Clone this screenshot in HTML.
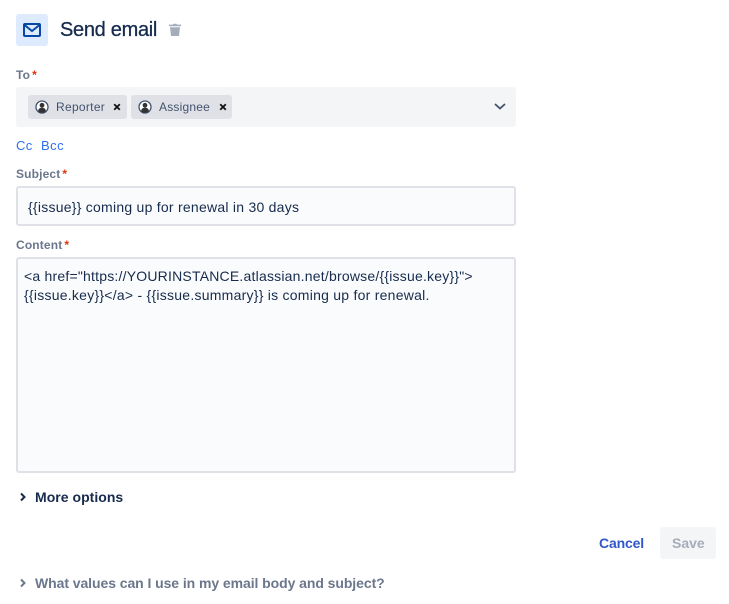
<!DOCTYPE html>
<html><head><meta charset="utf-8">
<style>
html,body{margin:0;padding:0;background:#fff;width:729px;height:604px;overflow:hidden}
body{font-family:"Liberation Sans",sans-serif;position:relative}
.t{position:absolute;white-space:nowrap}
.b{position:absolute;box-sizing:border-box}
.lab{font-size:12px;font-weight:700;color:#6b778c;line-height:16px;letter-spacing:.15px}
.lab i{font-style:normal;color:#de350b;margin-left:2px}
.tag{position:absolute;top:95px;height:24px;background:#dfe1e6;border-radius:3px}
.in{font-size:14px;color:#172b4d;line-height:20px}
</style></head><body>
<div class="b" style="left:16px;top:14px;width:32px;height:32px;background:#deebff;border-radius:3px"></div>
<svg class="b" style="left:16px;top:14px" width="32" height="32" viewBox="0 0 32 32"><rect x="8" y="10" width="16" height="12" rx="1" fill="none" stroke="#0747a6" stroke-width="2"/><path d="M8.5 11l7.5 6 7.5-6" fill="none" stroke="#0747a6" stroke-width="2"/></svg>
<div class="t" style="left:60px;top:18px;font-size:20px;line-height:24px;color:#172b4d;letter-spacing:-.3px;-webkit-text-stroke:.3px #172b4d">Send email</div>
<svg class="b" style="left:168px;top:23px" width="14" height="14" viewBox="0 0 14 14"><path d="M1 1.6h4l.5-.8h3l.5.8h4v1.6H1z" fill="#a5adba"/><path d="M2 4.2h10L11 13H3z" fill="#a5adba"/></svg>

<div class="t lab" style="left:16px;top:67px">To<i>*</i></div>
<div class="b" style="left:16px;top:87px;width:500px;height:40px;background:#f4f5f7;border-radius:3px"></div>
<div class="tag" style="left:28px;width:99px"></div>
<div class="tag" style="left:131px;width:101px"></div>
<svg class="b" style="left:35px;top:100px" width="14" height="14" viewBox="0 0 14 14"><circle cx="7" cy="7" r="6" fill="#fff" stroke="#42526e" stroke-width="1.3"/><circle cx="7" cy="5.3" r="2.4" fill="#333"/><path d="M3.2 11.2c0-2.4 1.6-3.4 3.8-3.4s3.8 1 3.8 3.4c-1 1-2.4 1.6-3.8 1.6s-2.8-.6-3.8-1.6z" fill="#333"/></svg>
<svg class="b" style="left:138px;top:100px" width="14" height="14" viewBox="0 0 14 14"><circle cx="7" cy="7" r="6" fill="#fff" stroke="#42526e" stroke-width="1.3"/><circle cx="7" cy="5.3" r="2.4" fill="#333"/><path d="M3.2 11.2c0-2.4 1.6-3.4 3.8-3.4s3.8 1 3.8 3.4c-1 1-2.4 1.6-3.8 1.6s-2.8-.6-3.8-1.6z" fill="#333"/></svg>
<div class="t" style="left:56px;top:99px;font-size:12px;line-height:16px;color:#42526e;letter-spacing:.3px">Reporter</div>
<div class="t" style="left:159px;top:99px;font-size:12px;line-height:16px;color:#42526e;letter-spacing:.2px">Assignee</div>
<svg class="b" style="left:113px;top:103px" width="8" height="8" viewBox="0 0 8 8"><path d="M1.2 1.2l5.6 5.6M6.8 1.2L1.2 6.8" stroke="#111" stroke-width="1.8"/></svg>
<svg class="b" style="left:219px;top:103px" width="8" height="8" viewBox="0 0 8 8"><path d="M1.2 1.2l5.6 5.6M6.8 1.2L1.2 6.8" stroke="#111" stroke-width="1.8"/></svg>
<svg class="b" style="left:494px;top:102px" width="12" height="9" viewBox="0 0 12 9"><path d="M1 2l5 4.5L11 2" fill="none" stroke="#42526e" stroke-width="1.8"/></svg>

<div class="t" style="left:16px;top:138px;font-size:13px;line-height:16px;color:#2f6fed;letter-spacing:.3px">Cc</div>
<div class="t" style="left:41px;top:138px;font-size:13px;line-height:16px;color:#2f6fed;letter-spacing:.5px">Bcc</div>

<div class="t lab" style="left:16px;top:166px">Subject<i>*</i></div>
<div class="b" style="left:16px;top:186px;width:500px;height:40px;background:#fafbfc;border:2px solid #dfe1e6;border-radius:3px"></div>
<div class="t in" style="left:28px;top:197px;letter-spacing:.25px">{{issue}} coming up for renewal in 30 days</div>

<div class="t lab" style="left:16px;top:237px">Content<i>*</i></div>
<div class="b" style="left:16px;top:257px;width:500px;height:216px;background:#fafbfc;border:2px solid #dfe1e6;border-radius:3px"></div>
<div class="t in" style="left:24px;top:266px;letter-spacing:.21px">&lt;a href="https://YOURINSTANCE.atlassian.net/browse/{{issue.key}}"&gt;</div>
<div class="t in" style="left:24px;top:285px;letter-spacing:.25px">{{issue.key}}&lt;/a&gt; - {{issue.summary}} is coming up for renewal.</div>

<svg class="b" style="left:19px;top:492px" width="8" height="10" viewBox="0 0 8 10"><path d="M2 1.5L5.5 5 2 8.5" fill="none" stroke="#172b4d" stroke-width="2"/></svg>
<div class="t" style="left:35px;top:489px;font-size:14px;font-weight:700;line-height:16px;color:#172b4d;letter-spacing:.03px">More options</div>

<div class="t" style="left:599px;top:535px;font-size:14px;font-weight:700;line-height:16px;color:#2f57c9;letter-spacing:-.15px">Cancel</div>
<div class="b" style="left:660px;top:527px;width:56px;height:32px;background:#f4f5f7;border-radius:3px"></div>
<div class="t" style="left:672px;top:535px;font-size:14px;font-weight:700;line-height:16px;color:#a5adba">Save</div>

<svg class="b" style="left:19px;top:578px" width="8" height="10" viewBox="0 0 8 10"><path d="M2 1.5L5.5 5 2 8.5" fill="none" stroke="#6b778c" stroke-width="2"/></svg>
<div class="t" style="left:35px;top:575px;font-size:14px;font-weight:700;line-height:16px;color:#6b778c;letter-spacing:-.07px">What values can I use in my email body and subject?</div>
</body></html>
